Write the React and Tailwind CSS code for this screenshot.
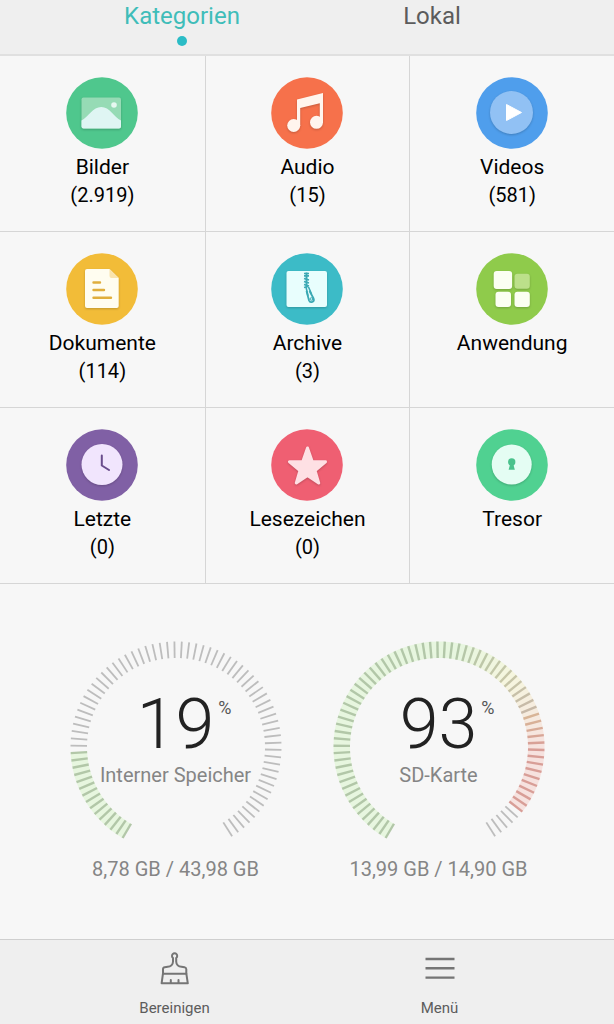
import { useState } from "react";

const shadow = "drop-shadow-[0_1px_1px_rgba(0,0,0,0.2)]";

function ImageIcon() {
  return (
    <g className={shadow}>
      <rect x="15.5" y="20.5" width="39.5" height="31" rx="2" fill="#96dbb5" />
      <path
        d="M15.5 43.5C22 40 27 30 35.3 30S48 40 55 43.5V49.5a2 2 0 0 1-2 2H17.5a2 2 0 0 1-2-2Z"
        fill="#dff5f3"
      />
      <circle cx="48" cy="28" r="2.8" fill="#e6f8f0" />
    </g>
  );
}

function AudioIcon() {
  return (
    <g fill="#fff5ee" className={shadow}>
      <path d="M26 22.5 52 16V46H48.8V26.3L29.2 31V49H26Z" />
      <circle cx="22.7" cy="48.5" r="6.5" />
      <circle cx="45.5" cy="45.3" r="6.5" />
    </g>
  );
}

function VideoIcon() {
  return (
    <g className={shadow}>
      <circle cx="35.5" cy="35.5" r="21.5" fill="#91c1f4" />
      <path
        d="M30.5 27.5V43.5L45.5 35.5Z"
        fill="#fff"
        stroke="#fff"
        strokeLinejoin="round"
      />
    </g>
  );
}

function DocumentIcon() {
  return (
    <>
      <g className={shadow}>
        <path
          d="M21 16H43.5L52.7 25V53a2 2 0 0 1-2 2H21a2 2 0 0 1-2-2V18a2 2 0 0 1 2-2Z"
          fill="#fffdf0"
        />
      </g>
      <path d="M43.5 16V23a2 2 0 0 0 2 2H52.7Z" fill="#fae4ae" />
      <path
        d="M27.5 29.5H34M27.5 37H38M27.5 44.7H45"
        stroke="#e0ae3c"
        strokeWidth="2.4"
        strokeLinecap="round"
      />
    </>
  );
}

function ArchiveIcon() {
  return (
    <>
      <rect
        x="15.5"
        y="18"
        width="40.5"
        height="36"
        rx="2"
        fill="#e8fefd"
        className={shadow}
      />
      <g stroke="#3ba9b4" fill="none">
        <path d="M35.5 19.5V34" strokeWidth="2" />
        <path
          d="M33 20.5H38M33 22.8H38M33 25.5 38 27M33 28.5 38 30M33 31.5 38 33M33 34.5 37 33.5"
          strokeWidth="1.7"
        />
        <path d="M35 34 37 43M37.5 34 40.5 41" strokeWidth="1.6" />
        <path
          d="M35.5 38 38 47.5a2.5 2.5 0 1 0 4.6-2L38.5 38"
          strokeWidth="1.8"
        />
        <circle cx="40.3" cy="46" r="1.3" strokeWidth="1" />
      </g>
    </>
  );
}

function AppsIcon() {
  return (
    <g fill="#fbfff2" className={shadow}>
      <rect x="17.7" y="18" width="18.4" height="18" rx="3" />
      <rect x="38.5" y="20.7" width="15.3" height="15" rx="3" fill="#bce08a" />
      <rect x="19.5" y="38.7" width="15.5" height="15.3" rx="3" />
      <rect x="38.5" y="38.7" width="15.3" height="15.3" rx="3" />
    </g>
  );
}

function RecentIcon() {
  return (
    <>
      <circle cx="36" cy="35.5" r="20.5" fill="#f1e5fd" className={shadow} />
      <path
        d="M35.8 26.5V36.5L43 41"
        fill="none"
        stroke="#694c8c"
        strokeWidth="2"
        strokeLinecap="round"
        strokeLinejoin="round"
      />
    </>
  );
}

function StarIcon() {
  return (
    <path
      d="M36.5 19 41.2 32.6 54.5 32.8 44 41.5 47.7 54 36.5 46.5 25.3 54 29 41.5 18.5 32.8 31.8 32.6Z"
      fill="#fee0e4"
      stroke="#fee0e4"
      strokeWidth="3"
      strokeLinejoin="round"
      className={shadow}
    />
  );
}

function SafeIcon() {
  return (
    <>
      <circle cx="35.7" cy="35.5" r="20" fill="#e4fdf3" className={shadow} />
      <circle cx="35.7" cy="33" r="3.7" fill="#4ac28c" />
      <path d="M34.5 34H37L38.8 40.7H32.6Z" fill="#4ac28c" />
    </>
  );
}

const categories = [
  { name: "Bilder", count: "2.919", color: "#4fc78d", Icon: ImageIcon },
  { name: "Audio", count: "15", color: "#f6714b", Icon: AudioIcon },
  { name: "Videos", count: "581", color: "#4f9eec", Icon: VideoIcon },
  { name: "Dokumente", count: "114", color: "#f2bc38", Icon: DocumentIcon },
  { name: "Archive", count: "3", color: "#3cbbc7", Icon: ArchiveIcon },
  { name: "Anwendung", color: "#8fcb4b", Icon: AppsIcon },
  { name: "Letzte", count: "0", color: "#8060a5", Icon: RecentIcon },
  { name: "Lesezeichen", count: "0", color: "#ef5f72", Icon: StarIcon },
  { name: "Tresor", color: "#50d191", Icon: SafeIcon },
];

const storages = [
  { name: "Interner Speicher", percent: 19, used: "8,78 GB", total: "43,98 GB" },
  { name: "SD-Karte", percent: 93, used: "13,99 GB", total: "14,90 GB" },
];

function Category({ name, count, color, Icon }) {
  return (
    <button className="flex flex-col items-center border-b border-l border-[#d6d6d6] pt-[21px] pb-[22px] text-black nth-[3n+1]:border-l-0">
      <svg viewBox="0 0 72 72" className="size-[72px]" aria-hidden="true">
        <circle cx="36" cy="36" r="35.8" fill={color} />
        <Icon />
      </svg>
      <span className="mt-1 min-h-14 text-[21px] leading-7">
        {name}
        {count && <span className="block text-xl leading-7">({count})</span>}
      </span>
    </button>
  );
}

const TICKS = 75;
const START = -149.6;
const STEP = 4.02;

// hue runs from green over yellow to red along the dial
function tickHue(angle) {
  if (angle < 10) return 100;
  if (angle > 90) return 6;
  return 100 - ((angle - 10) / 80) * 94;
}

function tickColor(angle) {
  const saturation = angle > 70 ? 45 : 22;
  return `hsl(${tickHue(angle)} ${saturation}% 72%)`;
}

function Gauge({ name, percent, used, total }) {
  const filled = Math.ceil((TICKS * percent) / 100);
  const ticks = Array.from({ length: TICKS }, (_, i) => START + i * STEP);

  return (
    <div className="flex flex-col items-center text-[#858585]">
      <div className="relative">
        <svg viewBox="0 0 212 212" className="size-[212px]" aria-hidden="true">
          {ticks.slice(0, filled - 1).map((angle) => (
            <path
              key={angle}
              d="M102.7 0.5H109.3L108.8 17H103.2Z"
              fill={`hsl(${tickHue(angle)} 55% 92%)`}
              transform={`rotate(${angle + STEP / 2} 106 106)`}
            />
          ))}
          {ticks.map((angle, i) => (
            <path
              key={angle}
              d="M106 0.5V17"
              stroke={i < filled ? tickColor(angle) : "#bdbdbd"}
              strokeWidth={i < filled ? 2.4 : 1.8}
              transform={`rotate(${angle} 106 106)`}
            />
          ))}
        </svg>
        <div className="absolute inset-0 flex flex-col items-center pt-[42px]">
          <p className="relative text-[70px] leading-[82px] font-light text-[#222]">
            {percent}
            <span className="absolute top-[11px] left-full ml-1 text-lg leading-7 font-normal text-[#555]">
              %
            </span>
          </p>
          <p className="text-xl leading-5 whitespace-nowrap">{name}</p>
        </div>
      </div>
      <p className="mt-0.5 text-xl leading-7">
        {used} / {total}
      </p>
    </div>
  );
}

function BrushIcon() {
  return (
    <svg
      viewBox="0 0 32 34"
      className="h-[34px] w-8"
      fill="none"
      stroke="#757575"
      strokeWidth="2"
      strokeLinejoin="round"
      strokeLinecap="round"
      aria-hidden="true"
    >
      <path d="M14 6A2.6 2.6 0 1 1 17.2 6V9.5C17.2 12.5 19.5 14.6 22.5 14.8L25.5 15.2Q27.2 15.4 27.3 17.3V21.3L28.8 31.3H2.6L4 21.3V17.3Q4 15.4 5.7 15.2L8.7 14.8C11.7 14.6 14 12.5 14 9.5Z" />
      <path d="M4 21.8H27.3M11.8 28V31M19.5 28V31" />
    </svg>
  );
}

function MenuIcon() {
  return (
    <svg
      viewBox="0 0 32 34"
      className="h-[34px] w-8"
      stroke="#757575"
      strokeWidth="2.4"
      aria-hidden="true"
    >
      <path d="M1.5 7H30.5M1.5 16.3H30.5M1.5 25.6H30.5" />
    </svg>
  );
}

function App() {
  const [tab, setTab] = useState("Kategorien");

  return (
    <div className="flex min-h-screen flex-col bg-[#f7f7f7] font-['Roboto',sans-serif]">
      <header className="grid h-14 grid-cols-2 border-b-2 border-[#e0e0e0] bg-[#efefef] px-[57px]">
        {["Kategorien", "Lokal"].map((name) => (
          <button
            key={name}
            onClick={() => setTab(name)}
            className={
              tab === name
                ? "flex flex-col items-center text-2xl leading-8 text-[#3fbdb9]"
                : "flex flex-col items-center text-2xl leading-8 text-[#5c5c5c]"
            }
          >
            {name}
            {tab === name && (
              <span className="mt-1 size-[10px] rounded-full bg-[#2bbcc6]" />
            )}
          </button>
        ))}
      </header>

      <main className="flex-1">
        <section className="grid grid-cols-3">
          {categories.map((category) => (
            <Category key={category.name} {...category} />
          ))}
        </section>
        <section className="grid grid-cols-2 px-11 pt-[57px] pb-10">
          {storages.map((storage) => (
            <Gauge key={storage.name} {...storage} />
          ))}
        </section>
      </main>

      <footer className="grid grid-cols-2 border-t border-[#cfcfcf] bg-[#efefef] px-[42px] text-[15px] leading-5 text-[#5c5c5c]">
        <button className="flex flex-col items-center gap-3 pt-3 pb-[6px]">
          <BrushIcon />
          Bereinigen
        </button>
        <button className="flex flex-col items-center gap-3 pt-3 pb-[6px]">
          <MenuIcon />
          Menü
        </button>
      </footer>
    </div>
  );
}

export default App;
